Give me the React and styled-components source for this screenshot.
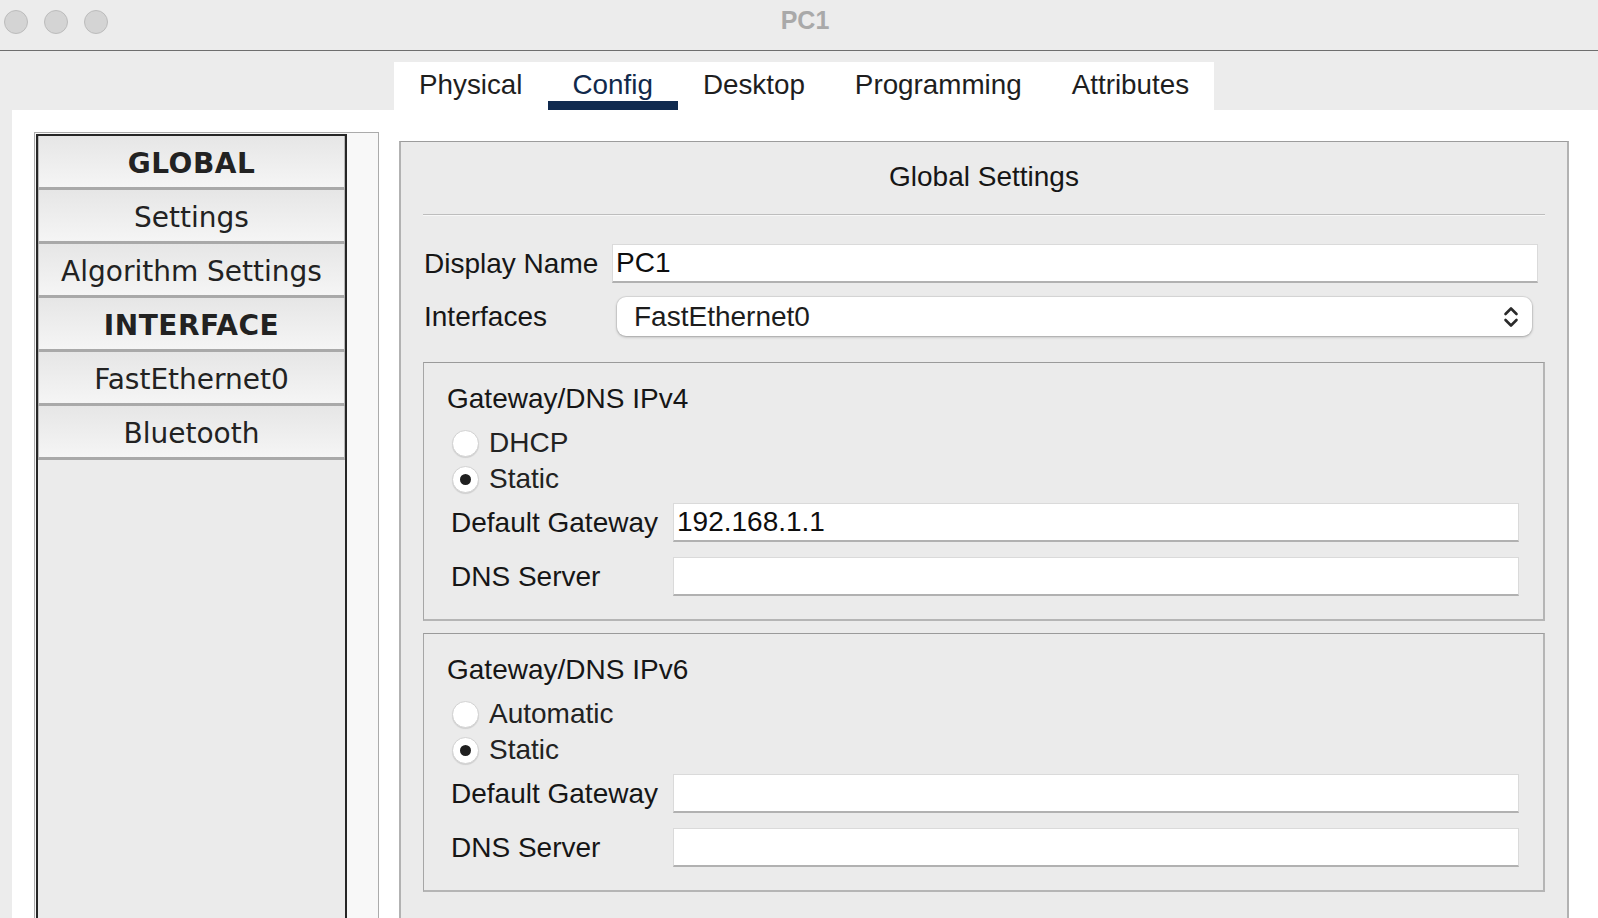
import React, { useState } from 'react'
import styled, { createGlobalStyle } from 'styled-components'

const GlobalStyle = createGlobalStyle`
    html, body {
        margin: 0;
        padding: 0;
        background: #ffffff;
    }
    body {
        font-family: "Liberation Sans", Arial, sans-serif;
        color: #1c1c1c;
    }
`

const Window = styled.div`
    width: 1598px;
    height: 918px;
    display: flex;
    flex-direction: column;
    overflow: hidden;
    background: #ececec;
`

const TitleBar = styled.div`
    height: 50px;
    flex: none;
    display: flex;
    align-items: center;
    position: relative;
    border-bottom: 1px solid #6e6e6e;
    background: #ececec;
`

const Lights = styled.div`
    display: flex;
    gap: 16px;
    padding-left: 4px;
    margin-top: -6px;
`

const Light = styled.span`
    width: 22px;
    height: 22px;
    border-radius: 50%;
    background: #d4d4d4;
    border: 1px solid #bcbcbc;
`

const Title = styled.div`
    position: absolute;
    left: 0;
    right: 0;
    top: 6px;
    text-align: center;
    padding-left: 12px;
    font-weight: bold;
    font-size: 25px;
    color: #a9a9a9;
`

const TabRow = styled.div`
    height: 59px;
    flex: none;
    display: flex;
    align-items: flex-end;
    padding-left: 394px;
`

const TabBar = styled.div`
    height: 48px;
    background: #ffffff;
    display: flex;
`

const Tab = styled.div`
    position: relative;
    padding: 0 25px 2px;
    display: flex;
    align-items: center;
    font-size: 27.8px;
    color: ${({ active }) => (active ? '#11294b' : '#1e1e1e')};
    cursor: pointer;

    &::after {
        content: '';
        display: ${({ active }) => (active ? 'block' : 'none')};
        position: absolute;
        left: 0;
        right: 0;
        bottom: 0;
        height: 9px;
        background: #102a4f;
    }
`

const Main = styled.div`
    flex: 1;
    min-height: 0;
    overflow: hidden;
    margin-left: 12px;
    background: #ffffff;
    display: flex;
    align-items: flex-start;
`

const SidebarFrame = styled.div`
    margin: 22px 0 0 22px;
    width: 343px;
    height: 900px;
    border: 1px solid #ababab;
    background: #f8f8f8;
    display: flex;
    flex: none;
`

const NavList = styled.div`
    margin: 1px 0 0 1px;
    width: 307px;
    border: 2px solid #262626;
    background: #ebebeb;
    display: flex;
    flex-direction: column;
`

const NavItem = styled.div`
    height: 54px;
    padding-top: 4px;
    box-sizing: border-box;
    border-left: 1px solid #b8b8b8;
    border-right: 1px solid #b8b8b8;
    border-bottom: 3px solid #a9a9a9;
    background: linear-gradient(#e6e6e6, #f5f5f5);
    display: flex;
    align-items: center;
    justify-content: center;
    font-family: "DejaVu Sans", Verdana, sans-serif;
    font-size: 28px;
    font-weight: ${({ bold }) => (bold ? 'bold' : 'normal')};
    letter-spacing: ${({ bold }) => (bold ? '0.5px' : '0')};
    color: #222;
`

const Panel = styled.div`
    margin: 31px 0 0 20px;
    width: 1122px;
    height: 820px;
    flex: none;
    background: #ebebeb;
    border-left: 2px solid #b2b2b2;
    border-top: 1px solid #9c9c9c;
    border-right: 2px solid #b2b2b2;
    padding: 0 22px 0 22px;
    display: flex;
    flex-direction: column;
`

const PanelTitle = styled.div`
    margin-top: 15px;
    line-height: 40px;
    text-align: center;
    font-size: 28px;
    color: #161616;
`

const Rule = styled.div`
    margin-top: 17px;
    height: 1px;
    background: #bdbdbd;
    border-bottom: 1px solid #f7f7f7;
`

const FieldRow = styled.div`
    display: flex;
    align-items: center;
    margin-top: ${({ top }) => top}px;
    padding-left: ${({ indent }) => indent || 0}px;
    padding-right: ${({ right }) => right || 0}px;
`

const Label = styled.div`
    width: ${({ w }) => w}px;
    flex: none;
    font-size: 28px;
    color: #161616;
    white-space: nowrap;
`

const TextBox = styled.div`
    flex: 1;
    height: 36px;
    background: #ffffff;
    border: 1px solid #dadada;
    border-bottom: 2px solid #b1b1b1;
    padding-left: 3px;
    display: flex;
    align-items: center;
    font-size: 28px;
    color: #0e0e0e;
`

const Select = styled.div`
    flex: 1;
    height: 39px;
    background: #ffffff;
    border-radius: 9px;
    box-shadow: 0 0 0 1px rgba(0, 0, 0, 0.06), 0 1px 3px rgba(0, 0, 0, 0.28);
    display: flex;
    align-items: center;
    justify-content: space-between;
    padding: 0 13px 0 17px;
    font-size: 28px;
    color: #1c1c1c;
`

const Group = styled.div`
    margin-top: ${({ top }) => top}px;
    height: 256px;
    border-top: 1px solid #9a9a9a;
    border-left: 1px solid #a6a6a6;
    border-right: 2px solid #b5b5b5;
    border-bottom: 2px solid #b5b5b5;
    padding: 0 23px;
    display: flex;
    flex-direction: column;
`

const GroupTitle = styled.div`
    margin-top: 19px;
    margin-bottom: 9px;
    line-height: 34px;
    font-size: 28px;
    color: #161616;
`

const RadioRow = styled.label`
    height: 36px;
    display: flex;
    align-items: center;
    padding-left: 5px;
    gap: 10px;
    font-size: 28px;
    color: #222;
    cursor: pointer;
`

const RadioDot = styled.span`
    width: 25px;
    height: 25px;
    border-radius: 50%;
    background: #ffffff;
    border: 1px solid #d2d2d2;
    box-shadow: 0 1px 1px rgba(0, 0, 0, 0.12);
    display: flex;
    align-items: center;
    justify-content: center;

    &::after {
        content: '';
        width: 11px;
        height: 11px;
        border-radius: 50%;
        background: #1f1f1f;
        display: ${({ checked }) => (checked ? 'block' : 'none')};
    }
`

const UpDown = () => (
    <svg width="16" height="24" viewBox="0 0 16 24" fill="none">
        <path d="M2.5 9 L8 3.5 L13.5 9" stroke="#2a2a2a" strokeWidth="2.6" strokeLinecap="round" strokeLinejoin="round" />
        <path d="M2.5 15 L8 20.5 L13.5 15" stroke="#2a2a2a" strokeWidth="2.6" strokeLinecap="round" strokeLinejoin="round" />
    </svg>
)

const GatewayGroup = ({ title, options, selected, onSelect, gateway, top }) => (
    <Group top={top}>
        <GroupTitle>{title}</GroupTitle>
        {options.map(o => (
            <RadioRow key={o} onClick={() => onSelect(o)}>
                <RadioDot checked={selected === o} />
                {o}
            </RadioRow>
        ))}
        <FieldRow top={6} indent={4} right={1}>
            <Label w={222}>Default Gateway</Label>
            <TextBox>{gateway}</TextBox>
        </FieldRow>
        <FieldRow top={15} indent={4} right={1}>
            <Label w={222}>DNS Server</Label>
            <TextBox />
        </FieldRow>
    </Group>
)

const tabs = ['Physical', 'Config', 'Desktop', 'Programming', 'Attributes']
const navItems = [
    { label: 'GLOBAL', bold: true },
    { label: 'Settings' },
    { label: 'Algorithm Settings' },
    { label: 'INTERFACE', bold: true },
    { label: 'FastEthernet0' },
    { label: 'Bluetooth' }
]

const App = () => {
    const [tab, setTab] = useState('Config')
    const [v4, setV4] = useState('Static')
    const [v6, setV6] = useState('Static')

    return (
        <Window>
            <GlobalStyle />
            <TitleBar>
                <Lights>
                    <Light />
                    <Light />
                    <Light />
                </Lights>
                <Title>PC1</Title>
            </TitleBar>
            <TabRow>
                <TabBar>
                    {tabs.map(t => (
                        <Tab key={t} active={t === tab} onClick={() => setTab(t)}>
                            {t}
                        </Tab>
                    ))}
                </TabBar>
            </TabRow>
            <Main>
                <SidebarFrame>
                    <NavList>
                        {navItems.map(n => (
                            <NavItem key={n.label} bold={n.bold}>{n.label}</NavItem>
                        ))}
                    </NavList>
                </SidebarFrame>
                <Panel>
                    <PanelTitle>Global Settings</PanelTitle>
                    <Rule />
                    <FieldRow top={28} indent={1} right={7}>
                        <Label w={188}>Display Name</Label>
                        <TextBox>PC1</TextBox>
                    </FieldRow>
                    <FieldRow top={14} indent={1} right={13}>
                        <Label w={193}>Interfaces</Label>
                        <Select>
                            FastEthernet0
                            <UpDown />
                        </Select>
                    </FieldRow>
                    <GatewayGroup
                        top={26}
                        title='Gateway/DNS IPv4'
                        options={['DHCP', 'Static']}
                        selected={v4}
                        onSelect={setV4}
                        gateway='192.168.1.1'
                    />
                    <GatewayGroup
                        top={12}
                        title='Gateway/DNS IPv6'
                        options={['Automatic', 'Static']}
                        selected={v6}
                        onSelect={setV6}
                        gateway=''
                    />
                </Panel>
            </Main>
        </Window>
    )
}

export default App
